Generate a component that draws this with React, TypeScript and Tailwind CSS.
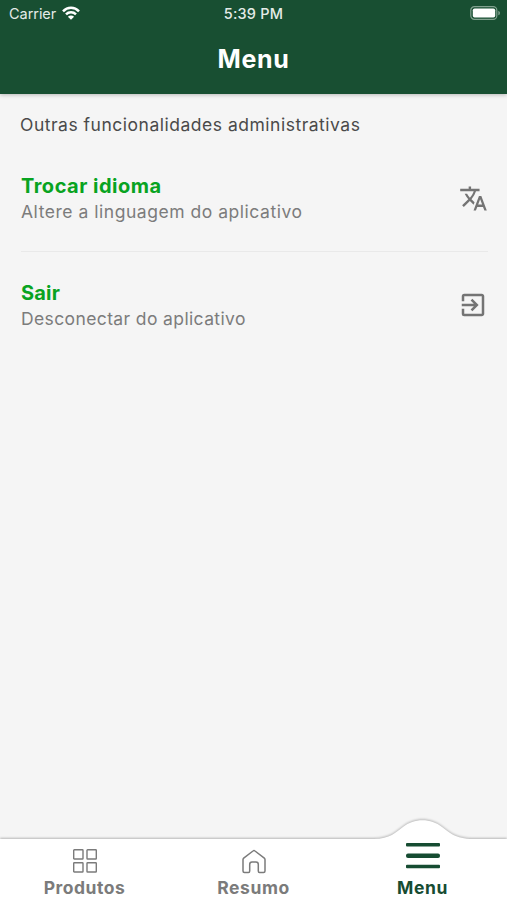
import type { ReactNode } from "react";
import { MdExitToApp, MdTranslate } from "react-icons/md";

function StatusBar() {
  return (
    <div className="relative flex h-7 items-center justify-between pl-[9px] pr-[6px] text-[14.5px] leading-7 text-[#e4ebe7]">
      <div className="flex items-center gap-[6px]">
        <span className="tracking-[-0.05px]">Carrier</span>
        <svg width="18" height="14" viewBox="0 0 18 14" fill="none" stroke="#fff" strokeWidth="2.5" className="-mt-[2px]">
          <path d="M1 5.3C5.5 .7 12.5 .7 17 5.3" />
          <path d="M4 8.4C6.8 5.6 11.2 5.6 14 8.4" />
          <path d="M9 13.8L5.9 10.7C7.7 9.1 10.3 9.1 12.1 10.7Z" fill="#fff" stroke="none" />
        </svg>
      </div>
      <span className="absolute inset-x-0 text-center font-medium tracking-[0.2px]">5:39 PM</span>
      <svg width="31" height="14" viewBox="0 0 31 14" className="-mt-[2px]">
        <rect x=".8" y=".7" width="26" height="12.6" rx="3.6" fill="none" stroke="#81a18f" strokeWidth="1.2" />
        <rect x="2.8" y="2.5" width="22.4" height="9" rx="1.8" fill="#fff" />
        <path d="M28.3 4.7c2.2 .8 2.2 3.8 0 4.6z" fill="#81a18f" />
      </svg>
    </div>
  );
}

function MenuItem({ title, text, titleClass, textClass, icon }: { title: string; text: string; titleClass: string; textClass: string; icon: ReactNode }) {
  return (
    <div className="flex h-[52px] items-center justify-between">
      <div className="whitespace-nowrap">
        <div className={`text-[20px] leading-[26px] font-bold text-[#08a321] ${titleClass}`}>{title}</div>
        <div className={`text-[17.5px] leading-[26px] text-[#7c7c7c] ${textClass}`}>{text}</div>
      </div>
      <div className="-mt-[2px] -mr-[2px] text-[#747474]">{icon}</div>
    </div>
  );
}

function Tab({ label, className, icon }: { label: string; className: string; icon: ReactNode }) {
  return (
    <div className={`flex flex-1 flex-col items-center text-[17.5px] leading-5 font-bold ${className}`}>
      <div className="flex h-10 items-center">{icon}</div>
      <span>{label}</span>
    </div>
  );
}

export default function App() {
  return (
    <div className="flex h-[900px] w-[507px] flex-col overflow-hidden bg-[#f5f5f5] font-['Inter',sans-serif]">
      <header className="h-[94px] shrink-0 bg-[#184f32] shadow-[0_1px_4px_rgba(0,0,0,0.25)]">
        <StatusBar />
        <h1 className="mt-[15px] text-center text-[25px] leading-8 font-bold tracking-[0.7px] text-white">Menu</h1>
      </header>
      <main className="flex-1 px-[21px] pt-[18px]">
        <p className="-ml-px text-[17.5px] leading-[26px] tracking-[0.51px] whitespace-nowrap text-[#4a4a4a]">Outras funcionalidades administrativas</p>
        <div className="mt-[35px]">
          <MenuItem title="Trocar idioma" text="Altere a linguagem do aplicativo" titleClass="tracking-[0.5px]" textClass="tracking-[0.53px]" icon={<MdTranslate size={29} />} />
        </div>
        <div className="mt-[26px] -mr-[2px] h-px bg-[#e9e9e9]" />
        <div className="mt-[28px]">
          <MenuItem title="Sair" text="Desconectar do aplicativo" titleClass="tracking-[0.2px]" textClass="tracking-[0.38px]" icon={<MdExitToApp size={30} />} />
        </div>
      </main>
      <nav className="relative h-[84px] shrink-0">
        <svg className="absolute inset-0 drop-shadow-[0_-1px_1px_rgba(0,0,0,0.25)]" width="507" height="84" viewBox="0 0 507 84">
          <path d="M0 23H374C390 23 396 16 403 11C414 2 431 2 442 11C449 16 455 23 473 23H507V84H0Z" fill="#fff" />
        </svg>
        <div className="relative flex h-full pt-[22px]">
          <Tab
            label="Produtos"
            className="tracking-[0.5px] text-[#7b7b7b]"
            icon={
              <svg width="26" height="26" viewBox="0 0 26 26" fill="none" stroke="currentColor" strokeWidth="1.4" className="mt-[6px]">
                <rect x="1.7" y="1.7" width="9.3" height="9.3" rx=".6" />
                <rect x="15" y="1.7" width="9.3" height="9.3" rx=".6" />
                <rect x="1.7" y="14.7" width="9.3" height="9.3" rx=".6" />
                <rect x="15" y="14.7" width="9.3" height="9.3" rx=".6" />
              </svg>
            }
          />
          <Tab
            label="Resumo"
            className="tracking-[0.6px] text-[#7b7b7b]"
            icon={
              <svg width="26" height="26" viewBox="0 0 26 26" fill="none" stroke="currentColor" strokeWidth="1.5" strokeLinejoin="round" className="mt-[7px]">
                <path d="M2 10.5Q2 9.7 2.7 9.1L12 2Q13 1.2 14 2L23.3 9.1Q24 9.7 24 10.5V22Q24 23.5 22.5 23.5H18.5Q17.3 23.5 17.3 22V15.5Q17.3 13 15 13H11Q8.7 13 8.7 15.5V22Q8.7 23.5 7.5 23.5H3.5Q2 23.5 2 22Z" />
              </svg>
            }
          />
          <Tab
            label="Menu"
            className="tracking-[0.6px] text-[#164c32]"
            icon={
              <svg width="36" height="28" viewBox="0 0 36 28" fill="currentColor" className="-mt-[4px]">
                <rect x="1" y="1" width="34" height="3.6" rx="1" />
                <rect x="1" y="11.5" width="34" height="4.4" rx="2" />
                <rect x="1" y="22.7" width="34" height="3.6" rx="1" />
              </svg>
            }
          />
        </div>
      </nav>
    </div>
  );
}
